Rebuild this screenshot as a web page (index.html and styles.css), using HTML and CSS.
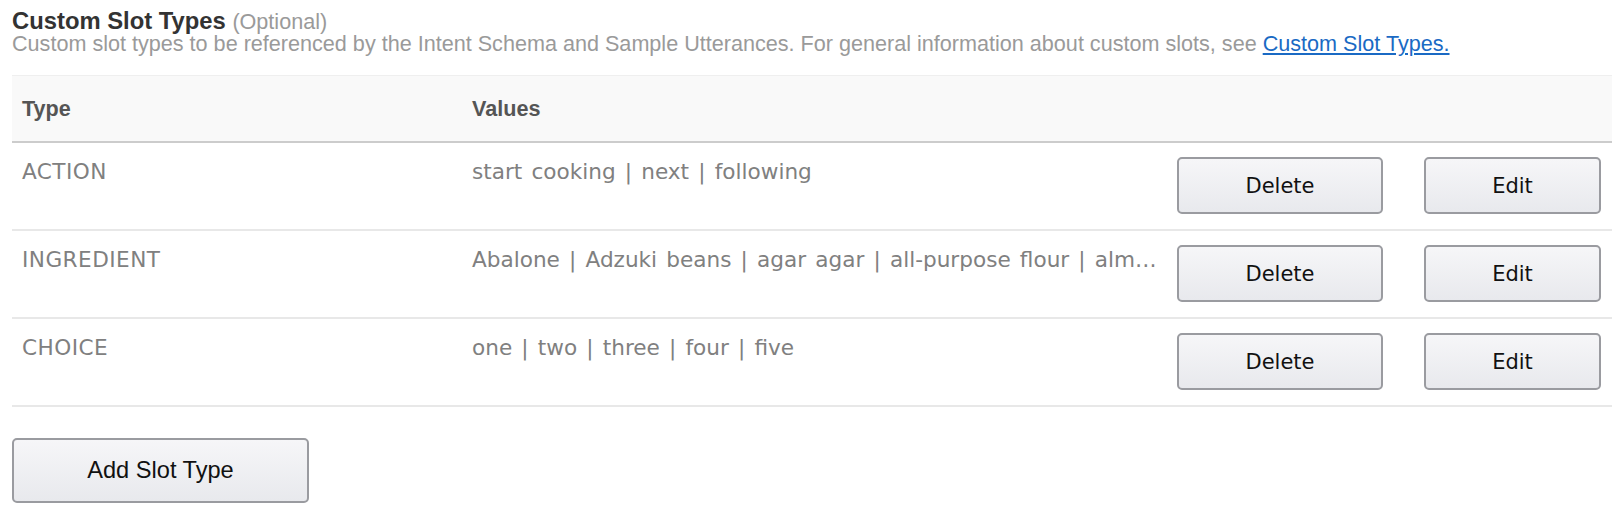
FILE: index.html
```html
<!DOCTYPE html>
<html lang="en">
<head>
<meta charset="utf-8">
<title>Custom Slot Types</title>
<link rel="stylesheet" href="styles.css">
</head>
<body>
<section class="slot-types">
  <h2 class="title">Custom Slot Types <span class="optional">(Optional)</span></h2>
  <p class="desc">Custom slot types to be referenced by the Intent Schema and Sample Utterances. For general information about custom slots, see <a href="#" class="link">Custom Slot Types.</a></p>

  <div class="table">
    <div class="row head">
      <div class="cell th">Type</div>
      <div class="cell th">Values</div>
      <div class="cell th"></div>
    </div>
    <div class="row">
      <div class="cell td type">ACTION</div>
      <div class="cell td values">start cooking | next | following</div>
      <div class="cell actions"><button class="btn btn-delete">Delete</button><button class="btn btn-edit">Edit</button></div>
    </div>
    <div class="row">
      <div class="cell td type">INGREDIENT</div>
      <div class="cell td values">Abalone | Adzuki beans | agar agar | all-purpose flour | almond | almond milk | amaranth | anchovies</div>
      <div class="cell actions"><button class="btn btn-delete">Delete</button><button class="btn btn-edit">Edit</button></div>
    </div>
    <div class="row">
      <div class="cell td type">CHOICE</div>
      <div class="cell td values">one | two | three | four | five</div>
      <div class="cell actions"><button class="btn btn-delete">Delete</button><button class="btn btn-edit">Edit</button></div>
    </div>
  </div>

  <button class="btn-add">Add Slot Type</button>
</section>
</body>
</html>
```
FILE: styles.css
```css
html, body {
  margin: 0;
  padding: 0;
  background: #ffffff;
}

.slot-types {
  padding: 11px 0 0 12px;
  width: 1600px;
  font-family: "Liberation Sans", Arial, sans-serif;
}

.title {
  margin: 0;
  font-size: 23.8px;
  line-height: 20px;
  font-weight: bold;
  color: #333333;
}

.optional {
  font-weight: normal;
  font-size: 21.6px;
  color: #9a9a9a;
}

.desc {
  margin: 0;
  font-size: 21.6px;
  line-height: 24px;
  color: #9a9a9a;
  white-space: nowrap;
}

.link {
  color: #1a6ac4;
  text-decoration: underline;
}

.table {
  margin-top: 19px;
  display: flex;
  flex-direction: column;
}

.row {
  display: grid;
  grid-template-columns: 450px 705px 1fr;
  height: 86px;
  border-bottom: 2px solid #e8e8e8;
}

.row.head {
  height: 65px;
  background: #f9f9f9;
  border-top: 1px solid #efefef;
  border-bottom: 2px solid #cccccc;
  align-items: center;
}

.cell {
  padding: 0 10px;
  min-width: 0;
}

.th {
  font-family: "Liberation Sans", Arial, sans-serif;
  font-weight: bold;
  font-size: 21.6px;
  color: #555555;
  line-height: 24px;
}

.td {
  font-family: "DejaVu Sans", Verdana, sans-serif;
  font-size: 21.6px;
  line-height: 26px;
  color: #808080;
  padding-top: 16px;
}

.type {
  letter-spacing: 0.45px;
}

.values {
  padding-right: 4px;
  word-spacing: 2.3px;
  white-space: nowrap;
  overflow: hidden;
  text-overflow: ellipsis;
}

.actions {
  display: flex;
  gap: 41px;
  padding-top: 14px;
}

.btn {
  height: 57px;
  border: 2px solid #9a9ba0;
  border-radius: 5px;
  background: linear-gradient(#f6f6f8, #e8e9ed);
  font-family: "DejaVu Sans", Verdana, sans-serif;
  font-size: 21px;
  color: #111111;
  padding: 0;
}

.btn-delete { width: 206px; }
.btn-edit { width: 177px; }

.btn-add {
  display: block;
  margin-top: 31px;
  width: 297px;
  height: 65px;
  border: 2px solid #9a9ba0;
  border-radius: 5px;
  background: linear-gradient(#f6f6f8, #e8e9ed);
  font-family: "Liberation Sans", Arial, sans-serif;
  font-size: 23.6px;
  color: #111111;
  padding: 0;
}
```
